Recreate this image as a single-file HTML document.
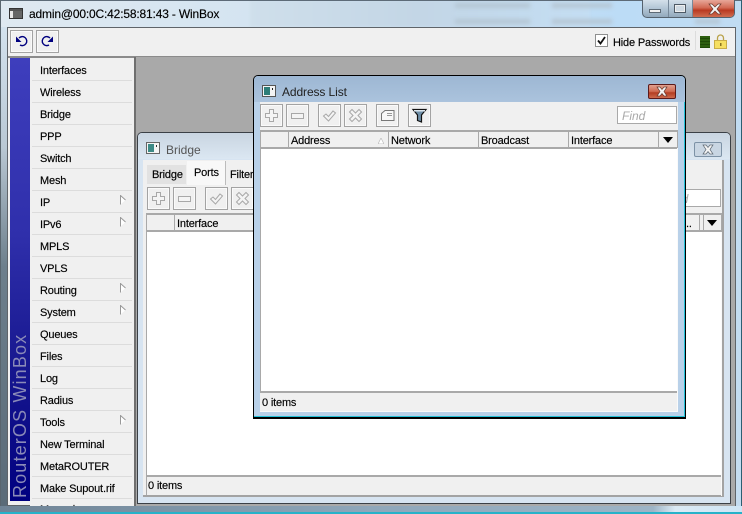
<!DOCTYPE html>
<html><head><meta charset="utf-8"><style>
html,body{margin:0;padding:0}
body{width:742px;height:514px;overflow:hidden;position:relative;background:#cfe1f0;font-family:"Liberation Sans",sans-serif;font-size:11px;color:#000}
div,svg,span{position:absolute;box-sizing:border-box}
.t{white-space:nowrap;line-height:14px;letter-spacing:-.17px;margin-top:1px;-webkit-text-stroke:.15px #000}
.btn{width:23px;height:23px;border:1px solid #a3a3a3;background:#f0f0f0;box-shadow:inset 0 0 0 1px #fafafa}
.btn svg{left:2px;top:2px}
.sep{left:32px;width:100px;height:1px;background:#dcdcdc}
.arr{left:120px;width:6px;height:10px}
.hc{top:0;width:1px;height:100%;background:#a9a9a9}
</style></head><body>
<!-- glass -->
<div style="left:0;top:0;width:742px;height:514px;background:linear-gradient(100deg,#dfe9f1 0%,#cfe2f1 45%,#bcdcf6 75%,#c4dcf0 100%)"></div>
<div style="left:250px;top:0;width:340px;height:27px;background:linear-gradient(90deg,#cfdfeb,#c3d6e6 50%,#c4def3);filter:blur(1px)"></div>
<div style="left:455px;top:3px;width:75px;height:5px;background:#b5c6d4;filter:blur(2px)"></div>
<div style="left:552px;top:3px;width:60px;height:5px;background:#b5c6d4;filter:blur(2px)"></div>
<div style="left:455px;top:19px;width:75px;height:5px;background:#b5c6d4;filter:blur(2px)"></div>
<div style="left:552px;top:19px;width:60px;height:5px;background:#b5c6d4;filter:blur(2px)"></div>
<div style="left:695px;top:19px;width:25px;height:5px;background:#b5c6d4;filter:blur(2px)"></div>
<div style="left:0;top:0;width:742px;height:1px;background:#5d6b78"></div>
<div style="left:0;top:0;width:1px;height:514px;background:#59656e"></div>
<div style="left:1px;top:27px;width:6px;height:480px;background:linear-gradient(#d3e2ee,#b9c8d4 25%,#6d7f8c 50%,#5a6b78)"></div>
<div style="left:741px;top:0;width:1px;height:514px;background:#2c5f72"></div>
<div style="left:0;top:512px;width:742px;height:2px;background:#27b2c9"></div>
<div style="left:0;top:506px;width:742px;height:6px;background:linear-gradient(90deg,#6f8496,#8fa7ba 50%,#9db4c6 88%,#dbeaf5 91%,#cfe5f5)"></div>
<!-- title -->
<svg style="left:9px;top:8px" width="14" height="12" viewBox="0 0 14 12"><rect x=".5" y=".5" width="13" height="10" fill="#e8e8e8" stroke="#333"/><rect x="1" y="1" width="12" height="2" fill="#555"/><rect x="4" y="3" width="9" height="7" fill="#666"/></svg>
<div class="t" style="left:29px;top:6px;font-size:12px">admin@00:0C:42:58:81:43 - WinBox</div>
<!-- caption buttons -->
<div style="left:642px;top:0;width:93px;height:18px;border:1px solid #55626e;border-top:0;border-radius:0 0 5px 5px;background:linear-gradient(#d4e0ea,#b2c5d5 50%,#93a9bc);overflow:hidden">
 <div style="left:50px;top:0;width:42px;height:17px;background:linear-gradient(#e7a79a,#d26a55 45%,#b93a22 60%,#cf6d50)"></div>
 <div style="left:25px;top:0;width:1px;height:17px;background:#77899a"></div>
 <div style="left:49px;top:0;width:1px;height:17px;background:#77899a"></div>
 <div style="left:6px;top:9px;width:12px;height:4px;background:#f2f2f2;border:1px solid #5e6a75"></div>
 <div style="left:31px;top:4px;width:12px;height:9px;background:#cfdae3;border:1px solid #4e5a66;box-shadow:inset 0 0 0 1px #eee"></div>
 <svg style="left:64px;top:3px" width="16" height="12" viewBox="0 0 16 12"><path d="M2 1h3l3 3 3-3h3l-4 5 4 5h-3l-3-3-3 3H2l4-5z" fill="#f4f4f4" stroke="#6b3b30" stroke-width=".7"/></svg>
</div>
<!-- main client -->
<div style="left:7px;top:27px;width:729px;height:479px;background:#f0f0f0;border:1px solid #5f6469"></div>
<div class="btn" style="left:10px;top:30px"><svg width="17" height="17" viewBox="0 0 17 17" fill="none" stroke="#00007f" stroke-width="1.4"><path d="M6 5A4.500 4.500 0 1 1 7 12"/><path d="M3 3.500V9H8.500z" fill="#00007f" stroke="none"/></svg></div>
<div class="btn" style="left:36px;top:30px"><svg width="17" height="17" viewBox="0 0 17 17" fill="none" stroke="#00007f" stroke-width="1.4"><path d="M11 5A4.500 4.500 0 1 0 10 12"/><path d="M14 3.500V9H8.500z" fill="#00007f" stroke="none"/></svg></div>
<div style="left:595px;top:34px;width:13px;height:13px;background:#fff;border:1px solid #8e8f8f"></div>
<svg style="left:596px;top:35px" width="11" height="11" viewBox="0 0 11 11"><path d="M2 5.500l2.500 3L9 2" fill="none" stroke="#111" stroke-width="1.800"/></svg>
<div class="t" style="left:613px;top:35px">Hide Passwords</div>
<div style="left:695px;top:31px;width:1px;height:19px;background:#dcdcdc"></div>
<div style="left:700px;top:36px;width:10px;height:12px;background:repeating-linear-gradient(#2d5f10 0 2px,#1f4a08 2px 3px)"></div>
<svg style="left:714px;top:34px" width="13" height="15" viewBox="0 0 13 15"><path d="M3.500 7V4a3 3 0 0 1 6 0v3" fill="none" stroke="#b9a24a" stroke-width="1.300"/><rect x=".5" y="6.500" width="12" height="8" fill="#f6df62" stroke="#c9ad48"/><rect x="6" y="9" width="1.500" height="3" fill="#8a7420"/></svg>
<div style="left:8px;top:56px;width:727px;height:2px;background:#8b8b8b"></div>
<!-- sidebar -->
<div style="left:10px;top:58px;width:20px;height:443px;background:linear-gradient(#3e3ebd,#2f2fab 40%,#17178f 70%,#000080)"></div>
<div style="white-space:nowrap;left:10px;top:498px;transform-origin:0 0;transform:rotate(-90deg);font-size:18px;line-height:20px;color:#8a8ab8;letter-spacing:1.150px">RouterOS WinBox</div>
<div style="left:30px;top:58px;width:104px;height:448px;background:#f0f0f0;overflow:hidden"></div>
<div class="t" style="left:40px;top:63px">Interfaces</div><div class="sep" style="top:80px"></div>
<div class="t" style="left:40px;top:85px">Wireless</div><div class="sep" style="top:102px"></div>
<div class="t" style="left:40px;top:107px">Bridge</div><div class="sep" style="top:124px"></div>
<div class="t" style="left:40px;top:129px">PPP</div><div class="sep" style="top:146px"></div>
<div class="t" style="left:40px;top:151px">Switch</div><div class="sep" style="top:168px"></div>
<div class="t" style="left:40px;top:173px">Mesh</div><div class="sep" style="top:190px"></div>
<div class="t" style="left:40px;top:195px">IP</div><div class="sep" style="top:212px"></div>
<div class="t" style="left:40px;top:217px">IPv6</div><div class="sep" style="top:234px"></div>
<div class="t" style="left:40px;top:239px">MPLS</div><div class="sep" style="top:256px"></div>
<div class="t" style="left:40px;top:261px">VPLS</div><div class="sep" style="top:278px"></div>
<div class="t" style="left:40px;top:283px">Routing</div><div class="sep" style="top:300px"></div>
<div class="t" style="left:40px;top:305px">System</div><div class="sep" style="top:322px"></div>
<div class="t" style="left:40px;top:327px">Queues</div><div class="sep" style="top:344px"></div>
<div class="t" style="left:40px;top:349px">Files</div><div class="sep" style="top:366px"></div>
<div class="t" style="left:40px;top:371px">Log</div><div class="sep" style="top:388px"></div>
<div class="t" style="left:40px;top:393px">Radius</div><div class="sep" style="top:410px"></div>
<div class="t" style="left:40px;top:415px">Tools</div><div class="sep" style="top:432px"></div>
<div class="t" style="left:40px;top:437px">New Terminal</div><div class="sep" style="top:454px"></div>
<div class="t" style="left:40px;top:459px">MetaROUTER</div><div class="sep" style="top:476px"></div>
<div class="t" style="left:40px;top:481px">Make Supout.rif</div><div class="sep" style="top:498px"></div>
<div style="left:30px;top:501px;width:104px;height:5px;overflow:hidden"><div class="t" style="left:10px;top:1px">Manual</div></div>
<svg class="arr" style="top:195px" viewBox="0 0 6 10"><path d="M.5 9.500V.5L5.500 5" fill="#fff" stroke="#999"/></svg>
<svg class="arr" style="top:217px" viewBox="0 0 6 10"><path d="M.5 9.500V.5L5.500 5" fill="#fff" stroke="#999"/></svg>
<svg class="arr" style="top:283px" viewBox="0 0 6 10"><path d="M.5 9.500V.5L5.500 5" fill="#fff" stroke="#999"/></svg>
<svg class="arr" style="top:305px" viewBox="0 0 6 10"><path d="M.5 9.500V.5L5.500 5" fill="#fff" stroke="#999"/></svg>
<svg class="arr" style="top:415px" viewBox="0 0 6 10"><path d="M.5 9.500V.5L5.500 5" fill="#fff" stroke="#999"/></svg>
<!-- workspace -->
<div style="left:134px;top:57px;width:601px;height:449px;background:#a9a9a9;border-left:2px solid #6f6f6f"></div>
<!-- Bridge window -->
<div style="left:137px;top:132px;width:594px;height:372px;background:#d7e4f1;border:1px solid #3b4046;border-radius:5px 5px 0 0"></div>
<div style="left:138px;top:133px;width:592px;height:26px;background:linear-gradient(#c9d5e1,#dbe7f2);border-radius:4px 4px 0 0"></div>
<svg style="left:146px;top:142px" width="14" height="13" viewBox="0 0 14 13"><rect x=".5" y=".5" width="13" height="11" fill="#f4f4f4" stroke="#666"/><rect x="2" y="2" width="6" height="8" fill="#3d8a86"/><rect x="10" y="3" width="1" height="2" fill="#333"/></svg>
<div class="t" style="left:166px;top:142px;font-size:12px;letter-spacing:0;color:#555;-webkit-text-stroke:0">Bridge</div>
<div style="left:694px;top:142px;width:28px;height:15px;border:1px solid #7d92a6;border-radius:2px;background:#c9d6e3"></div>
<svg style="left:701px;top:144px" width="14" height="11" viewBox="0 0 14 11"><path d="M2 1h3l2 2.500L9 1h3L9 5.500 12 10H9L7 7.500 5 10H2l3-4.500z" fill="#f4f4f4" stroke="#5f6a75" stroke-width=".7"/></svg>
<div style="left:143px;top:160px;width:581px;height:337px;background:#f0f0f0;border-right:2px solid #a3a3a3;border-bottom:2px solid #a3a3a3"></div>
<div style="left:147px;top:165px;width:39px;height:19px;background:#e2e2e2"></div>
<div class="t" style="left:152px;top:167px">Bridge</div>
<div style="left:187px;top:161px;width:39px;height:24px;background:#f8f8f8;border-right:1px solid #bcbcbc"></div>
<div class="t" style="left:194px;top:165px">Ports</div>
<div class="t" style="left:230px;top:167px">Filter</div>
<div class="btn" style="left:147px;top:187px"><svg width="17" height="17" viewBox="0 0 17 17"><path d="M6.500 2.500h4v4h4v4h-4v4h-4v-4h-4v-4h4z" fill="#f4f4f4" stroke="#a8a8a8"/></svg></div>
<div class="btn" style="left:173px;top:187px"><svg width="17" height="17" viewBox="0 0 17 17"><rect x="2.500" y="6.500" width="12" height="5" fill="#f4f4f4" stroke="#a8a8a8"/></svg></div>
<div class="btn" style="left:205px;top:187px"><svg width="17" height="17" viewBox="0 0 17 17"><path d="M2.500 9l2.500-2 2.500 2.500L12 4l2.500 2-7 8z" fill="#f4f4f4" stroke="#a8a8a8"/></svg></div>
<div class="btn" style="left:231px;top:187px"><svg width="17" height="17" viewBox="0 0 17 17"><path d="M5 2.500l3.500 3.500L12 2.500l2.500 2.500L11 8.500l3.500 3.500-2.500 2.500L8.500 11 5 14.500 2.500 12 6 8.500 2.500 5z" fill="#f4f4f4" stroke="#a8a8a8"/></svg></div>
<div style="left:660px;top:189px;width:61px;height:18px;background:#fff;border:1px solid #a9a9a9"></div>
<div style="white-space:nowrap;line-height:14px;left:665px;top:192px;font-style:italic;color:#a9a9a9;font-size:12px">Find</div>
<div style="left:146px;top:213px;width:576px;height:19px;background:#f0f0f0;border-top:2px solid #a9a9a9;border-bottom:2px solid #a9a9a9"></div>
<div style="left:146px;top:213px;width:1px;height:282px;background:#a9a9a9"></div>
<div style="left:174px;top:213px;width:1px;height:18px;background:#a9a9a9"></div>
<div class="t" style="left:177px;top:216px">Interface</div>
<div style="left:699px;top:213px;width:1px;height:18px;background:#a9a9a9"></div>
<div style="left:703px;top:213px;width:1px;height:18px;background:#a9a9a9"></div>
<div style="left:721px;top:213px;width:1px;height:18px;background:#a9a9a9"></div>
<div class="t" style="left:686px;top:216px">..</div>
<svg style="left:707px;top:220px" width="11" height="6" viewBox="0 0 11 6"><path d="M0 0h10L5 6z"/></svg>
<div style="left:147px;top:232px;width:574px;height:243px;background:#fff"></div>
<div style="left:147px;top:475px;width:574px;height:20px;background:#f0f0f0;border-top:2px solid #a9a9a9"></div>
<div style="left:721px;top:232px;width:1px;height:264px;background:#fafafa"></div>
<div class="t" style="left:148px;top:478px">0 items</div>
<!-- Address List window -->
<div style="left:253px;top:75px;width:433px;height:344px;background:#b9d1e9;border:1px solid #000;border-bottom-width:2px;border-radius:5px 5px 0 0;box-shadow:inset 0 -1px 0 #22c1d8,inset -1px 0 0 #22c1d8"></div>
<div style="left:254px;top:76px;width:431px;height:26px;background:linear-gradient(#9db7d3,#abc3dd);border-radius:4px 4px 0 0"></div>
<svg style="left:262px;top:85px" width="14" height="13" viewBox="0 0 14 13"><rect x=".5" y=".5" width="13" height="11" fill="#f4f4f4" stroke="#555"/><rect x="2" y="2" width="6" height="8" fill="#2d7d78"/><rect x="10" y="3" width="1" height="2" fill="#222"/></svg>
<div class="t" style="left:282px;top:84px;font-size:12px;letter-spacing:-.1px;color:#222;-webkit-text-stroke:0">Address List</div>
<div style="left:648px;top:84px;width:28px;height:15px;border:1px solid #5c1a1a;border-radius:2px;background:linear-gradient(#e0a090,#cf6a50 50%,#b33d22 60%,#cd6a4d)"></div>
<svg style="left:655px;top:86px" width="14" height="11" viewBox="0 0 14 11"><path d="M2 1h3l2 2.500L9 1h3L9 5.500 12 10H9L7 7.500 5 10H2l3-4.500z" fill="#f4f4f4" stroke="#6b3b30" stroke-width=".7"/></svg>
<div style="left:260px;top:102px;width:418px;height:310px;background:#f0f0f0"></div>
<div class="btn" style="left:260px;top:104px"><svg width="17" height="17" viewBox="0 0 17 17"><path d="M6.500 2.500h4v4h4v4h-4v4h-4v-4h-4v-4h4z" fill="#f4f4f4" stroke="#a8a8a8"/></svg></div>
<div class="btn" style="left:286px;top:104px"><svg width="17" height="17" viewBox="0 0 17 17"><rect x="2.500" y="6.500" width="12" height="5" fill="#f4f4f4" stroke="#a8a8a8"/></svg></div>
<div class="btn" style="left:318px;top:104px"><svg width="17" height="17" viewBox="0 0 17 17"><path d="M2.500 9l2.500-2 2.500 2.500L12 4l2.500 2-7 8z" fill="#f4f4f4" stroke="#a8a8a8"/></svg></div>
<div class="btn" style="left:344px;top:104px"><svg width="17" height="17" viewBox="0 0 17 17"><path d="M5 2.500l3.500 3.500L12 2.500l2.500 2.500L11 8.500l3.500 3.500-2.500 2.500L8.500 11 5 14.500 2.500 12 6 8.500 2.500 5z" fill="#f4f4f4" stroke="#a8a8a8"/></svg></div>
<div class="btn" style="left:376px;top:104px"><svg width="17" height="17" viewBox="0 0 17 17"><path d="M2.500 6.500 6 3.500h9v10h-12.500z" fill="#f8f8f8" stroke="#777"/><path d="M8 6.500h5M8 8.500h5" stroke="#999"/></svg></div>
<div class="btn" style="left:408px;top:104px"><svg width="17" height="17" viewBox="0 0 17 17"><path d="M2 2.500h13L10.500 8v7l-4-1.500V8z" fill="#6f8fa8" stroke="#111" stroke-width="1.200"/><path d="M3 3h11v1.500H3z" fill="#dbe6ee"/></svg></div>
<div style="left:617px;top:106px;width:60px;height:18px;background:#fff;border:1px solid #a9a9a9"></div>
<div style="white-space:nowrap;line-height:14px;left:622px;top:109px;font-style:italic;color:#a9a9a9;font-size:12px">Find</div>
<div style="left:260px;top:130px;width:418px;height:19px;background:#f0f0f0;border-top:2px solid #a9a9a9;border-bottom:2px solid #a9a9a9"></div>
<div style="left:260px;top:130px;width:1px;height:18px;background:#a9a9a9"></div>
<div style="left:288px;top:130px;width:1px;height:18px;background:#a9a9a9"></div>
<div style="left:388px;top:130px;width:1px;height:18px;background:#a9a9a9"></div>
<div style="left:478px;top:130px;width:1px;height:18px;background:#a9a9a9"></div>
<div style="left:568px;top:130px;width:1px;height:18px;background:#a9a9a9"></div>
<div style="left:658px;top:130px;width:1px;height:18px;background:#a9a9a9"></div>
<div class="t" style="left:291px;top:133px">Address</div>
<svg style="left:378px;top:138px" width="6" height="6" viewBox="0 0 6 6"><path d="M3 0 6 6H0z" fill="#fff" stroke="#bbb" stroke-width=".7"/></svg>
<div class="t" style="left:391px;top:133px">Network</div>
<div class="t" style="left:481px;top:133px">Broadcast</div>
<div class="t" style="left:571px;top:133px">Interface</div>
<svg style="left:663px;top:137px" width="10" height="6" viewBox="0 0 10 6"><path d="M0 0h10L5 6z"/></svg>
<div style="left:261px;top:149px;width:416px;height:242px;background:#fff"></div>
<div style="left:260px;top:149px;width:1px;height:262px;background:#a9a9a9"></div>
<div style="left:260px;top:391px;width:417px;height:20px;background:#f0f0f0;border-top:2px solid #a9a9a9"></div>
<div style="left:260px;top:411px;width:417px;height:1px;background:#fafafa"></div>
<div style="left:677px;top:130px;width:1px;height:282px;background:#fafafa"></div>
<div style="left:677px;top:130px;width:1px;height:18px;background:#a9a9a9"></div>
<div class="t" style="left:262px;top:395px">0 items</div>
</body></html>
